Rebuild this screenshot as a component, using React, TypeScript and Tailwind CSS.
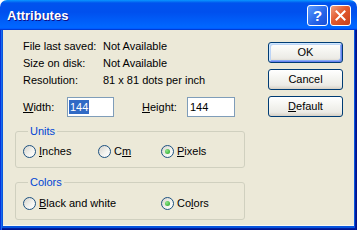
import React from "react";

function Radio({ checked }: { checked?: boolean }) {
  return (
    <span className="flex h-[13px] w-[13px] shrink-0 items-center justify-center rounded-full border border-[#1c5180] bg-[linear-gradient(135deg,#d6d4cc_0%,#f4f4f0_60%,#ffffff_100%)]">
      {checked && (
        <span className="h-[5px] w-[5px] rounded-full bg-[radial-gradient(circle_at_35%_35%,#8ee68a,#21a121)]" />
      )}
    </span>
  );
}

function RadioItem({
  checked,
  children,
  w,
}: {
  checked?: boolean;
  children: React.ReactNode;
  w: string;
}) {
  return (
    <div className={`flex h-[13px] items-center gap-[3px] ${w}`}>
      <Radio checked={checked} />
      <span className="leading-[13px]">{children}</span>
    </div>
  );
}

function XPButton({
  children,
  primary,
}: {
  children: React.ReactNode;
  primary?: boolean;
}) {
  return (
    <div
      className={`flex h-[21px] w-[75px] items-center justify-center rounded-[3px] border border-[#003c74] bg-[linear-gradient(180deg,#ffffff_0%,#f4f4f0_45%,#ecebe6_80%,#d6d0c5_100%)] leading-[13px] ${
        primary
          ? "shadow-[inset_1px_1px_#cee7ff,inset_-1px_-1px_#6982ee,inset_2px_2px_#bcd4f6,inset_-2px_-2px_#89adf4]"
          : ""
      }`}
    >
      {children}
    </div>
  );
}

export default function App() {
  return (
    <div className="h-[230px] w-[357px] bg-white font-['Liberation_Sans',Arial,sans-serif] text-[11px] text-black">
      <div className="flex h-[230px] w-[357px] flex-col overflow-hidden rounded-t-[7px]">
        {/* Title bar */}
        <div className="flex h-[30px] shrink-0 items-center justify-between bg-[linear-gradient(180deg,#0997ff_0%,#0053ee_10%,#0050ee_40%,#0066ff_88%,#0066ff_93%,#005bff_95%,#003dd7_96%,#003dd7_100%)] pl-[7px] pr-[6px]">
          <span className="pt-[1px] text-[13px] font-bold text-white [text-shadow:1px_1px_#0f1089]">
            Attributes
          </span>
          <div className="flex items-center gap-[2px]">
            <div className="flex h-[21px] w-[21px] items-center justify-center rounded-[3px] border border-white bg-[linear-gradient(135deg,#5a9bff_0%,#2563e8_60%,#1a50d8_100%)] text-[15px] font-bold leading-none text-white">
              ?
            </div>
            <div className="flex h-[21px] w-[21px] items-center justify-center rounded-[3px] border border-white bg-[linear-gradient(135deg,#f0a080_0%,#e35a2e_45%,#c8401a_100%)]">
              <svg width="11" height="11" viewBox="0 0 11 11">
                <path
                  d="M1.5 1.5 L9.5 9.5 M9.5 1.5 L1.5 9.5"
                  stroke="white"
                  strokeWidth="2"
                  strokeLinecap="square"
                />
              </svg>
            </div>
          </div>
        </div>

        {/* Body with window borders */}
        <div className="flex flex-1 bg-[#0855dd] px-[3px] pb-[4px] shadow-[inset_1px_0_#0831d9,inset_2px_0_#166aee,inset_-1px_0_#00138c,inset_-2px_0_#001ea0,inset_0_-1px_#00138c,inset_0_-2px_#001ea0]">
          <div className="flex flex-1 bg-[#ece9d8] shadow-[inset_0_-1px_#f8f8f4]">
            {/* Left column */}
            <div className="ml-[12px] flex w-[230px] flex-col">
              <div className="mt-[8px] flex flex-col pl-[8px]">
                <div className="flex h-[17px] items-center">
                  <span className="w-[80px]">File last saved:</span>
                  <span>Not Available</span>
                </div>
                <div className="flex h-[17px] items-center">
                  <span className="w-[80px]">Size on disk:</span>
                  <span>Not Available</span>
                </div>
                <div className="flex h-[17px] items-center">
                  <span className="w-[80px]">Resolution:</span>
                  <span>81 x 81 dots per inch</span>
                </div>
              </div>

              <div className="mt-[8px] flex h-[20px] items-center pl-[8px]">
                <span className="w-[44px]">
                  <span className="underline">W</span>idth:
                </span>
                <div className="flex h-[20px] w-[47px] items-center border border-[#7f9db9] bg-white pl-[1px]">
                  <span className="bg-[#316ac5] px-[1px] leading-[14px] text-white">
                    144
                  </span>
                </div>
                <span className="ml-[28px] w-[45px]">
                  <span className="underline">H</span>eight:
                </span>
                <div className="flex h-[20px] w-[48px] items-center border border-[#7f9db9] bg-white pl-[2px]">
                  <span className="leading-[14px]">144</span>
                </div>
              </div>

              <fieldset className="mt-[8px] rounded-[3px] border border-[#d0d0bf] pb-[9px] pl-[7px]">
                <legend className="ml-[5px] px-[2px] leading-[13px] text-[#0046d5]">
                  Units
                </legend>
                <div className="mt-[7px] flex">
                  <RadioItem w="w-[75px]">
                    <span className="underline">I</span>nches
                  </RadioItem>
                  <RadioItem w="w-[63px]">
                    C<span className="underline">m</span>
                  </RadioItem>
                  <RadioItem w="w-[60px]" checked>
                    <span className="underline">P</span>ixels
                  </RadioItem>
                </div>
              </fieldset>

              <fieldset className="mt-[8px] rounded-[3px] border border-[#d0d0bf] pb-[9px] pl-[7px]">
                <legend className="ml-[5px] px-[2px] leading-[13px] text-[#0046d5]">
                  Colors
                </legend>
                <div className="mt-[8px] flex">
                  <RadioItem w="w-[138px]">
                    <span className="underline">B</span>lack and white
                  </RadioItem>
                  <RadioItem w="w-[60px]" checked>
                    Co<span className="underline">l</span>ors
                  </RadioItem>
                </div>
              </fieldset>
            </div>

            {/* Right column */}
            <div className="ml-[23px] flex flex-col gap-[6px] pt-[12px]">
              <XPButton primary>OK</XPButton>
              <XPButton>Cancel</XPButton>
              <XPButton>
                <span>
                  <span className="underline">D</span>efault
                </span>
              </XPButton>
            </div>
          </div>
        </div>
      </div>
    </div>
  );
}
